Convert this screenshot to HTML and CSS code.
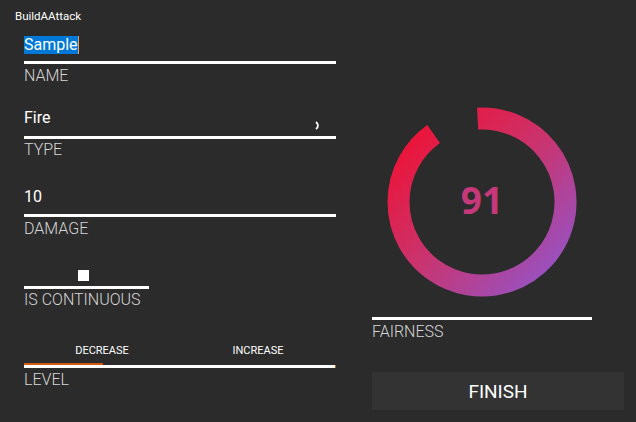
FILE: index.html
```html
<!DOCTYPE html>
<html>
<head>
<meta charset="utf-8">
<link rel="stylesheet" href="styles.css">
</head>
<body>
<div class="app">
  <div class="title">BuildAAttack</div>
  <div class="main">
    <div class="left">
      <div class="field f-name">
        <div class="value"><span class="sel">Sample</span><span class="caret"></span></div>
        <div class="rule"></div>
        <div class="label">NAME</div>
      </div>
      <div class="field f-type">
        <div class="value combo">
          <span>Fire</span>
          <svg class="chev" width="8" height="9" viewBox="0 0 8 9"><path d="M2 1 Q6 4.5 2 8" fill="none" stroke="#fff" stroke-width="1.8"/></svg>
        </div>
        <div class="rule"></div>
        <div class="label">TYPE</div>
      </div>
      <div class="field f-damage">
        <div class="value">10</div>
        <div class="rule"></div>
        <div class="label">DAMAGE</div>
      </div>
      <div class="field f-cont">
        <div class="toggle"><div class="knob"></div></div>
        <div class="rule short"></div>
        <div class="label">IS CONTINUOUS</div>
      </div>
      <div class="field f-level">
        <div class="tabs">
          <div class="tab">DECREASE</div>
          <div class="tab">INCREASE</div>
        </div>
        <div class="indicator"></div>
        <div class="rule level-rule"></div>
        <div class="label">LEVEL</div>
      </div>
    </div>
    <div class="right">
      <div class="ring">
        <svg width="190" height="190" viewBox="0 0 190 190">
          <defs>
            <linearGradient id="g" gradientUnits="userSpaceOnUse" x1="20" y1="20" x2="170" y2="170">
              <stop offset="0" stop-color="#ef1133"/>
              <stop offset="0.5" stop-color="#c9346f"/>
              <stop offset="1" stop-color="#9553c6"/>
            </linearGradient>
          </defs>
          <path d="M 90.63 11.61 A 83.5 83.5 0 1 1 46.63 26.94" fill="none" stroke="url(#g)" stroke-width="22"/>
        </svg>
        <div class="score">91</div>
      </div>
      <div class="rule fair-rule"></div>
      <div class="label">FAIRNESS</div>
      <button class="finish">FINISH</button>
    </div>
  </div>
</div>
</body>
</html>
```

FILE: styles.css
```css
html, body {
  margin: 0;
  padding: 0;
  background: #2b2b2b;
}
body {
  width: 636px;
  height: 422px;
  overflow: hidden;
  font-family: Roboto, "Noto Sans", sans-serif;
  color: #ffffff;
}
.app {
  display: flex;
  flex-direction: column;
}
.title {
  margin: 9px 0 0 15px;
  font-size: 11.5px;
  line-height: 15px;
  color: #ffffff;
}
.main {
  display: flex;
  gap: 36px;
  padding-left: 24px;
}
.left {
  width: 312px;
  display: flex;
  flex-direction: column;
}
.field {
  display: flex;
  flex-direction: column;
}
.value {
  font-size: 16px;
  line-height: 20px;
  height: 20px;
  color: #ffffff;
  display: flex;
  align-items: center;
}
.sel {
  background: #0078d7;
  line-height: 18px;
  height: 18px;
}
.caret {
  width: 1px;
  height: 18px;
  background: #e8a060;
}
.rule {
  height: 3px;
  background: #ffffff;
}
.label {
  font-size: 16px;
  line-height: 20px;
  font-weight: 300;
  color: #d6d6d6;
}
.f-name { margin-top: 11px; }
.f-name .rule { margin-top: 6px; }
.f-name .label { margin-top: 2px; }

.f-type { margin-top: 22px; }
.combo {
  justify-content: space-between;
}
.chev {
  margin-right: 14px;
  margin-top: 14px;
}
.f-type .rule { margin-top: 8px; }
.f-type .label { margin-top: 1px; }

.f-damage { margin-top: 27px; }
.f-damage .rule { margin-top: 7px; }
.f-damage .label { margin-top: 2px; }

.f-cont { margin-top: 31px; }
.toggle {
  height: 11px;
  padding-left: 54px;
}
.knob {
  width: 11px;
  height: 11px;
  background: #ffffff;
}
.rule.short {
  width: 125px;
  margin-top: 5px;
}
.f-cont .label { margin-top: 1px; }

.f-level { margin-top: 34px; }
.tabs {
  display: grid;
  grid-template-columns: 1fr 1fr;
}
.tab {
  font-size: 11px;
  line-height: 14px;
  font-weight: 400;
  text-align: center;
  color: #ffffff;
}
.indicator {
  margin-top: 5px;
  width: 79px;
  height: 2px;
  background: #d05a12;
}
.level-rule {
  border-right: 1px solid #d05a12;
}
.f-level .label { margin-top: 2px; }

.right {
  width: 252px;
  display: flex;
  flex-direction: column;
}
.ring {
  margin-top: 83px;
  width: 220px;
  height: 190px;
  display: grid;
  place-items: center;
}
.ring svg, .ring .score {
  grid-area: 1 / 1;
}
.ring svg { display: block; }
.score {
  font-family: "Open Sans", sans-serif;
  font-weight: 700;
  font-size: 37px;
  line-height: 37px;
  color: #c5387a;
  margin-bottom: 5px;
}
.fair-rule {
  width: 220px;
  margin-top: 20px;
}
.right .label { margin-top: 2px; }
.finish {
  margin-top: 30px;
  height: 38px;
  width: 252px;
  border: none;
  background: #333333;
  color: #ffffff;
  font-family: Roboto, "Noto Sans", sans-serif;
  font-size: 19px;
  padding: 0;
}
```
